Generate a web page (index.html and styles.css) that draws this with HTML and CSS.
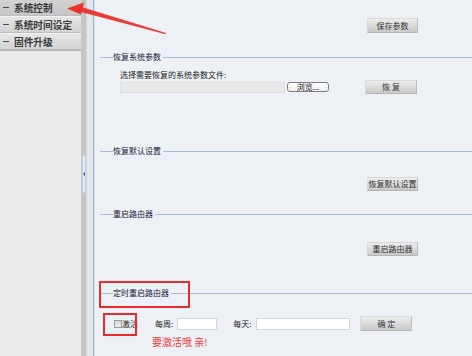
FILE: index.html
```html
<!DOCTYPE html>
<html lang="zh-CN">
<head>
<meta charset="utf-8">
<title>系统控制</title>
<link rel="stylesheet" href="styles.css">
</head>
<body>
<div class="page">
  <aside class="sidebar">
    <ul class="menu">
      <li class="menu-item active"><span class="dash"></span>系统控制</li>
      <li class="menu-item"><span class="dash"></span>系统时间设定</li>
      <li class="menu-item"><span class="dash"></span>固件升级</li>
    </ul>
  </aside>
  <div class="splitter"><div class="grip"><span class="tri"></span></div></div>
  <main class="content">
    <div class="btn-row top"><button class="btn">保存参数</button></div>

    <div class="legend l1"><span class="legend-text">恢复系统参数</span></div>
    <div class="label">选择需要恢复的系统参数文件:</div>
    <div class="file-row">
      <span class="file-box"></span>
      <button class="browse">浏览...</button>
      <button class="btn btn-restore">恢 复</button>
    </div>

    <div class="legend l2"><span class="legend-text">恢复默认设置</span></div>
    <div class="btn-row r2"><button class="btn">恢复默认设置</button></div>

    <div class="legend l3"><span class="legend-text">重启路由器</span></div>
    <div class="btn-row r3"><button class="btn">重启路由器</button></div>

    <div class="legend l4"><span class="legend-text">定时重启路由器</span></div>
    <div class="ctrl-row">
      <span class="check"></span><span class="check-label">激活</span>
      <span class="field-label week">每周:</span><span class="input week-input"></span>
      <span class="field-label day">每天:</span><span class="input day-input"></span>
      <button class="btn btn-ok">确 定</button>
    </div>
    <div class="hint">要激活哦 亲!</div>
  </main>

  <div class="mark mark-legend"></div>
  <div class="mark mark-check"></div>
  <svg class="arrow" width="472" height="356" viewBox="0 0 472 356">
    <polygon points="80,6.5 166,33 165.6,34.2 79,11.5" fill="#e8312b" opacity="0.95"/>
    <polygon points="67,8.5 84,2.5 81,14.5" fill="#e8312b"/>
  </svg>
</div>
</body>
</html>
```

FILE: styles.css
```css
* { box-sizing: border-box; margin: 0; padding: 0; }
html, body { width: 472px; height: 356px; overflow: hidden; }
body {
  font-family: "Noto Sans CJK SC", "Liberation Sans", sans-serif;
  font-size: 8px;
  line-height: 10px;
  color: #222;
  background: #edf1f5;
}
.page { position: relative; display: flex; width: 472px; height: 356px; }

/* sidebar */
.sidebar { width: 81px; background: #ebebeb; flex: none; }
.menu { list-style: none; border-bottom: 1px solid #b9b9b9; }
.menu-item {
  display: flex; align-items: center;
  height: 17px;
  padding-left: 3px;
  font-size: 9.7px; font-weight: bold; color: #3a3a3a;
  background: linear-gradient(#e6e6e6, #d3d3d3);
  border-top: 1px solid #f4f4f4;
  border-bottom: 1px solid #bdbdbd;
}
.menu-item.active { height: 16px; background: linear-gradient(#d2d2d2, #c6c6c6); border-top: 0; }
.dash { width: 6px; height: 1px; background: #4a4a4a; margin-right: 5px; }

/* splitter */
.splitter {
  width: 13px; flex: none;
  background: linear-gradient(to right, #c5c5c5 0 5px, #d6d6d6 5px 6px, #e3e6ea 6px 12px, #9db4d2 12px 13px);
}
.grip {
  margin: 155px 0 0 1px; width: 4px; height: 38px;
  background: #dbe7f3; border: 1px solid #c3d5e8; border-radius: 1px;
  display: flex; align-items: center; justify-content: center;
}
.tri { width: 0; height: 0; border-top: 2.5px solid transparent; border-bottom: 2.5px solid transparent; border-right: 2.5px solid #1b5c9e; }

/* content */
.content { flex: 1; padding-top: 18px; box-shadow: inset 1px 0 0 #dde6f0; }
.btn {
  font-family: inherit; font-size: 8px; line-height: 10px; color: #333;
  width: 51px; height: 15px;
  background: linear-gradient(#ececec, #c9c9c9);
  border: 1px solid #d9d9d9; border-bottom-color: #b5b5b5; border-right-color: #bcbcbc;
}
.btn-row { padding-left: 273px; height: 15px; display: flex; }

.legend { display: flex; align-items: center; height: 10px; padding-left: 6px; }
.legend::before { content: ""; width: 13px; height: 1px; background: #a8bcd6; }
.legend::after { content: ""; flex: 1; height: 1px; background: #a8bcd6; }
.legend-text { padding-right: 2px; color: #16163a; }
.l1 { margin-top: 19px; }
.label { margin-top: 8px; padding-left: 26px; height: 10px; }
.file-row { display: flex; align-items: center; height: 14px; padding-left: 26px; }
.file-box { width: 165px; height: 11px; background: #e8e8e8; border: 1px solid #dedede; }
.browse {
  font-family: inherit; font-size: 8px; line-height: 8px; color: #222;
  width: 42px; height: 10px; margin-left: 2px;
  background: linear-gradient(#ffffff, #ececec);
  border: 1px solid #7f7f7f; border-radius: 3px;
}
.btn-restore { margin-left: 36px; width: 52px; height: 14px; }

.l2 { margin-top: 52px; }
.r2 { margin-top: 21px; height: 14px; }
.r2 .btn { height: 14px; }
.l3 { margin-top: 18px; }
.r3 { margin-top: 23px; height: 14px; }
.r3 .btn { height: 14px; }
.l4 { margin-top: 32px; }

.ctrl-row { display: flex; align-items: center; height: 15px; margin-top: 18px; padding-left: 20px; }
.check { width: 8px; height: 8px; background: linear-gradient(#d6d6d6, #f0f0f0); border: 1px solid #9c9c9c; }
.check-label { margin-left: 0; }
.field-label.week { margin-left: 17px; }
.input { height: 12px; background: #fff; border: 1px solid #d4d8dc; }
.week-input { width: 40px; margin-left: 4px; }
.field-label.day { margin-left: 16px; }
.day-input { width: 94px; margin-left: 5px; }
.btn-ok { margin-left: 10px; width: 52px; }

.hint { margin-top: 5px; padding-left: 58px; font-size: 10px; line-height: 12px; color: #ee3b3b; }

/* annotations */
.mark { position: absolute; border: 2px solid #ea2b2b; }
.mark-legend { left: 99px; top: 281px; width: 91px; height: 27px; }
.mark-check { left: 103px; top: 313px; width: 34px; height: 23px; }
.arrow { position: absolute; left: 0; top: 0; pointer-events: none; }
```
